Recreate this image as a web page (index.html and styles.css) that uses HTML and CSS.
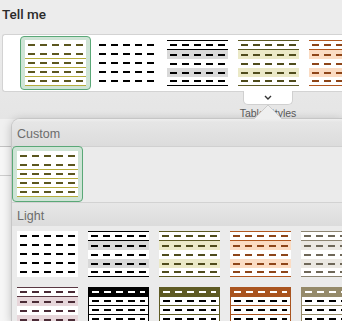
FILE: index.html
```html
<!DOCTYPE html>
<html>
<head>
<meta charset="utf-8">
<link rel="stylesheet" href="styles.css">
</head>
<body>
<div class="app">
<div class="titlebar">Tell me</div>
<div class="ribbon">
  <div class="gallery">
    <div class="cell selected"><div class="tbl t-sel"><i></i><i></i><i></i><i></i><i></i></div></div>
    <div class="cell"><div class="tbl t-plain"><i></i><i></i><i></i><i></i><i></i></div></div>
    <div class="cell"><div class="tbl t-band c-black"><i></i><i></i><i></i><i></i><i></i></div></div>
    <div class="cell"><div class="tbl t-band c-olive"><i></i><i></i><i></i><i></i><i></i></div></div>
    <div class="cell"><div class="tbl t-band c-orange"><i></i><i></i><i></i><i></i><i></i></div></div>
  </div>
  <div class="gallery-foot">
    <div class="expand"><svg width="8" height="5" viewBox="0 0 8 5"><path d="M1 1 L4 4 L7 1" fill="none" stroke="#333" stroke-width="1.4"/></svg></div>
    <div class="label">Table Styles</div>
  </div>
</div>
<div class="sheet">
  <div class="fbar"></div>
  <div class="colhdr"></div>
</div>

<div class="popover">
  <svg class="arrow" width="28" height="15" viewBox="0 0 28 15"><path d="M0 15 L14 1 L28 15" fill="#efefef" stroke="#cbcbcb"/></svg>
  <div class="panel">
    <div class="sec-head first">Custom</div>
    <div class="custom">
      <div class="cell selected"><div class="tbl t-sel"><i></i><i></i><i></i><i></i><i></i></div></div>
    </div>
    <div class="sec-head">Light</div>
    <div class="grid">
      <div class="cell"><div class="tbl t-plain"><i></i><i></i><i></i><i></i><i></i></div></div>
      <div class="cell"><div class="tbl t-band c-black"><i></i><i></i><i></i><i></i><i></i></div></div>
      <div class="cell"><div class="tbl t-band c-olive"><i></i><i></i><i></i><i></i><i></i></div></div>
      <div class="cell"><div class="tbl t-band c-orange"><i></i><i></i><i></i><i></i><i></i></div></div>
      <div class="cell"><div class="tbl t-band c-taupe"><i></i><i></i><i></i><i></i><i></i></div></div>
      <div class="cell"><div class="tbl t-band c-maroon"><i></i><i></i><i></i><i></i><i></i></div></div>
      <div class="cell"><div class="tbl t-head h-black"><i></i><i></i><i></i><i></i><i></i></div></div>
      <div class="cell"><div class="tbl t-head h-olive"><i></i><i></i><i></i><i></i><i></i></div></div>
      <div class="cell"><div class="tbl t-head h-orange"><i></i><i></i><i></i><i></i><i></i></div></div>
      <div class="cell"><div class="tbl t-head h-taupe"><i></i><i></i><i></i><i></i><i></i></div></div>
    </div>
  </div>
</div>
</div>
</body>
</html>
```

FILE: styles.css
```css
* { box-sizing: border-box; }
html, body {
  margin: 0;
  padding: 0;
}
body {
  width: 342px;
  height: 321px;
  overflow: hidden;
  background: #ececec;
  font-family: "Liberation Sans", Arial, sans-serif;
}
.app {
  position: relative;
  width: 342px;
  height: 321px;
  overflow: hidden;
}

.titlebar {
  height: 34px;
  padding: 6px 0 0 2px;
  font-family: Roboto, "Liberation Sans", sans-serif;
  font-weight: 500;
  font-size: 13.5px;
  line-height: 16px;
  color: #2a2a2a;
}

.ribbon {
  height: 85px;
  background: linear-gradient(#ececec, #e5e5e5);
}

.gallery {
  display: flex;
  overflow: hidden;
  margin-left: 2px;
  width: 340px;
  height: 58px;
  padding-left: 17px;
  background: #fff;
  border: 1px solid #d3d3d3;
  border-right: none;
  border-radius: 3px 0 0 3px;
}

.cell {
  flex: none;
  width: 71px;
  height: 56px;
  padding: 5px;
}
.gallery .cell.selected {
  height: 54px;
  margin-top: 1px;
  padding-top: 3px;
}
.cell.selected {
  background: #cfe4d6;
  border: 1px solid #5aa877;
  border-radius: 4px;
  padding: 4px;
}

.gallery-foot {
  display: flex;
  flex-direction: column;
  align-items: center;
  width: 60px;
  margin-left: 238px;
}
.expand {
  width: 50px;
  height: 14px;
  margin-top: -1px;
  background: #fff;
  border: 1px solid #d0d0d0;
  border-top: none;
  border-radius: 0 0 5px 5px;
  display: flex;
  justify-content: center;
  align-items: center;
  padding-bottom: 1px;
}
.label {
  margin-top: 2px;
  font-size: 10.5px;
  line-height: 12px;
  color: #5a5a5a;
  white-space: nowrap;
}

.sheet {
  background: #f6f6f6;
  height: 202px;
}
.fbar {
  height: 28px;
  background: #f0f0f0;
  border-bottom: 1px solid #c2c2c2;
}
.colhdr {
  height: 29px;
  border-bottom: 1px solid #cdcdcd;
}

/* popover */
.popover {
  position: absolute;
  left: 11px;
  top: 118px;
  width: 331px;
  height: 203px;
  background: #ebebeb;
  border: 1px solid #c6c6c6;
  border-right: none;
  border-bottom: none;
  border-radius: 9px 0 0 0;
  box-shadow: 0 2px 10px rgba(0, 0, 0, 0.22);
}
.panel {
  width: 100%;
  height: 100%;
  overflow: hidden;
  border-radius: 8px 0 0 0;
}
.arrow {
  position: absolute;
  left: 242px;
  top: -15px;
}
.sec-head {
  height: 24px;
  padding: 2px 0 0 5px;
  font-size: 12.5px;
  line-height: 23px;
  color: #6c6c6c;
  background: linear-gradient(#e7e7e7, #dcdcdc);
  border-top: 1px solid #d2d2d2;
}
.sec-head.first {
  height: 28px;
  padding-top: 3px;
  line-height: 24px;
  border-top: none;
  border-bottom: 1px solid #d0d0d0;
  background: linear-gradient(#efefef 0, #e6e6e6 3px, #dcdcdc);
}
.custom {
  height: 56px;
  margin-top: -1px;
}
.custom .cell.selected {
  padding-top: 4px;
}
.grid {
  display: grid;
  grid-template-columns: repeat(5, 71px);
  grid-auto-rows: 56px;
}

/* table thumbnails */
.tbl {
  --d: #000;
  --l: #000;
  --b: #d9d9d9;
  width: 61px;
  height: 46px;
  background: #fff;
  display: flex;
  flex-direction: column;
}
.tbl i {
  display: flex;
  align-items: center;
  height: 9px;
  flex: none;
  padding: 0 3px;
}
.tbl i::before {
  content: "";
  flex: 1;
  height: 2px;
  background: repeating-linear-gradient(90deg, var(--d) 0 7px, transparent 7px 12px);
}

.t-sel { --d: #5b561e; }
.t-sel i:nth-child(n+2) { border-bottom: 1px solid #b5ac3c; }
.t-sel i:nth-child(2) { height: 10px; }

.t-band {
  border-top: 1px solid var(--l);
  border-bottom: 1px solid var(--l);
}
.t-band i:first-child { border-bottom: 1px solid var(--l); }
.t-band i:nth-child(2),
.t-band i:nth-child(4) { background: var(--b); }
.t-band i:last-child { height: 8px; }

.c-black { --l: #000; --d: #000; --b: #d9d9d9; }
.c-olive { --l: #5b5822; --d: #4f4c1c; --b: #ebe9c7; }
.c-orange { --l: #b0571f; --d: #8e4518; --b: #fbdcc3; }
.c-taupe { --l: #8c8471; --d: #6e6758; --b: #ebe8e2; }
.c-maroon { --l: #5a3843; --d: #4b2b36; --b: #e7d6da; }

.t-head {
  border-left: 1px solid var(--l);
  border-right: 1px solid var(--l);
  border-bottom: 1px solid var(--l);
}
.t-head i:first-child {
  background: var(--l);
  --d: #fff;
}
.t-head i:nth-child(n+2) { border-top: 1px solid var(--l); }
.h-black { --l: #000; }
.h-olive { --l: #5e5a23; }
.h-orange { --l: #a9541f; }
.h-taupe { --l: #958a6a; }
```
